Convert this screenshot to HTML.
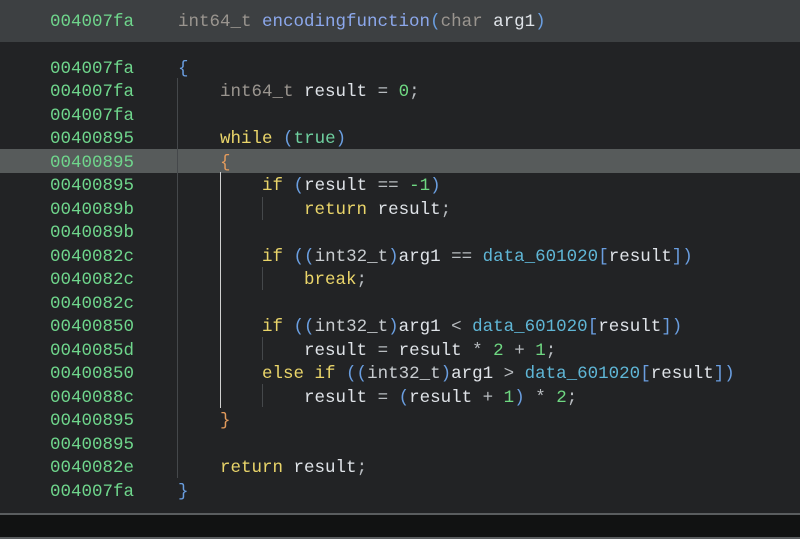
<!DOCTYPE html>
<html><head><meta charset="utf-8"><style>
html,body{margin:0;padding:0;width:800px;height:539px;overflow:hidden;background:#222325;}
body{position:relative;font-family:"Liberation Mono","DejaVu Sans Mono",monospace;font-size:17.5px;}
.hdr{position:absolute;left:0;top:0;width:800px;height:42px;background:#3d4042;}
.r{position:absolute;left:0;height:23.5px;line-height:23.5px;white-space:pre;width:800px;margin-top:2px}
.a{position:absolute;left:50px;color:#6fd68c;}
.c{position:absolute;left:178px;color:#d8dde2;}
.ty{color:#9a958f}.v{color:#dfe3e8}.k{color:#ead56a}.p{color:#6a9ee0}.n{color:#6fd882}.d{color:#5fb6d6}.f{color:#8ca8ec}.o{color:#b8bcc0}.b{color:#e39b5c}.t{color:#6fd0a0}
.hl{position:absolute;left:0;top:149px;width:800px;height:23.5px;background:#575b5b;}
.g{position:absolute;width:1px;background:#45484b;}
.foot{position:absolute;left:0;top:513px;width:800px;background:#111212;border-top:2px solid #5a5d5f;border-bottom:2px solid #5a5d5f;box-sizing:border-box;height:26px}
</style></head><body>
<div class="hdr"></div>
<div class="hl"></div>
<div class="g" style="left:177px;top:78px;height:400px"></div>
<div class="g" style="left:220px;top:172px;height:236px;background:#d0d0d0"></div>
<div class="g" style="left:262px;top:197px;height:23px"></div>
<div class="g" style="left:262px;top:267px;height:23px"></div>
<div class="g" style="left:262px;top:337px;height:23px"></div>
<div class="g" style="left:262px;top:384px;height:23px"></div>

<div class="r" style="top:9px"><span class="a">004007fa</span><span class="c"><span class="ty">int64_t</span> <span class="f">encodingfunction</span><span class="p">(</span><span class="ty">char</span> <span class="v">arg1</span><span class="p">)</span></span></div>

<div class="r" style="top:55.5px"><span class="a">004007fa</span><span class="c"><span class="p">{</span></span></div>
<div class="r" style="top:79px"><span class="a">004007fa</span><span class="c">    <span class="ty">int64_t</span> <span class="v">result</span> <span class="o">=</span> <span class="n">0</span><span class="o">;</span></span></div>
<div class="r" style="top:102.5px"><span class="a">004007fa</span></div>
<div class="r" style="top:126px"><span class="a">00400895</span><span class="c">    <span class="k">while</span> <span class="p">(</span><span class="t">true</span><span class="p">)</span></span></div>
<div class="r" style="top:149.5px"><span class="a">00400895</span><span class="c">    <span class="b">{</span></span></div>
<div class="r" style="top:173px"><span class="a">00400895</span><span class="c">        <span class="k">if</span> <span class="p">(</span><span class="v">result</span> <span class="o">==</span> <span class="n">-1</span><span class="p">)</span></span></div>
<div class="r" style="top:196.5px"><span class="a">0040089b</span><span class="c">            <span class="k">return</span> <span class="v">result</span><span class="o">;</span></span></div>
<div class="r" style="top:220px"><span class="a">0040089b</span></div>
<div class="r" style="top:243.5px"><span class="a">0040082c</span><span class="c">        <span class="k">if</span> <span class="p">((</span><span class="ty" style="color:#c8ccd0">int32_t</span><span class="p">)</span><span class="v">arg1</span> <span class="o">==</span> <span class="d">data_601020</span><span class="p">[</span><span class="v">result</span><span class="p">])</span></span></div>
<div class="r" style="top:267px"><span class="a">0040082c</span><span class="c">            <span class="k">break</span><span class="o">;</span></span></div>
<div class="r" style="top:290.5px"><span class="a">0040082c</span></div>
<div class="r" style="top:314px"><span class="a">00400850</span><span class="c">        <span class="k">if</span> <span class="p">((</span><span class="ty" style="color:#c8ccd0">int32_t</span><span class="p">)</span><span class="v">arg1</span> <span class="o">&lt;</span> <span class="d">data_601020</span><span class="p">[</span><span class="v">result</span><span class="p">])</span></span></div>
<div class="r" style="top:337.5px"><span class="a">0040085d</span><span class="c">            <span class="v">result</span> <span class="o">=</span> <span class="v">result</span> <span class="o">*</span> <span class="n">2</span> <span class="o">+</span> <span class="n">1</span><span class="o">;</span></span></div>
<div class="r" style="top:361px"><span class="a">00400850</span><span class="c">        <span class="k">else if</span> <span class="p">((</span><span class="ty" style="color:#c8ccd0">int32_t</span><span class="p">)</span><span class="v">arg1</span> <span class="o">&gt;</span> <span class="d">data_601020</span><span class="p">[</span><span class="v">result</span><span class="p">])</span></span></div>
<div class="r" style="top:384.5px"><span class="a">0040088c</span><span class="c">            <span class="v">result</span> <span class="o">=</span> <span class="p">(</span><span class="v">result</span> <span class="o">+</span> <span class="n">1</span><span class="p">)</span> <span class="o">*</span> <span class="n">2</span><span class="o">;</span></span></div>
<div class="r" style="top:408px"><span class="a">00400895</span><span class="c">    <span class="b">}</span></span></div>
<div class="r" style="top:431.5px"><span class="a">00400895</span></div>
<div class="r" style="top:455px"><span class="a">0040082e</span><span class="c">    <span class="k">return</span> <span class="v">result</span><span class="o">;</span></span></div>
<div class="r" style="top:478.5px"><span class="a">004007fa</span><span class="c"><span class="p">}</span></span></div>

<div class="foot"></div>
</body></html>
